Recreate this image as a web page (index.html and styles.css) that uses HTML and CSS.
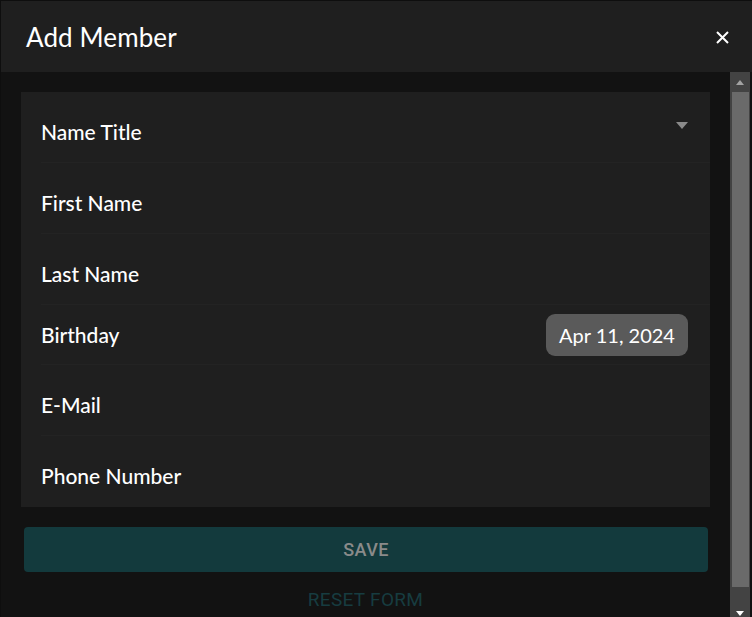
FILE: index.html
```html
<!DOCTYPE html>
<html lang="en">
<head>
<meta charset="utf-8">
<title>Add Member</title>
<link rel="stylesheet" href="styles.css">
</head>
<body>
<div class="dialog">
  <header class="dialog-header">
    <h1 class="dialog-title">Add Member</h1>
    <button class="close-btn" aria-label="Close">
      <svg width="13" height="13" viewBox="0 0 13 13"><path d="M1 1L12 12M12 1L1 12" stroke="#ffffff" stroke-width="2" fill="none"/></svg>
    </button>
  </header>
  <div class="dialog-body">
    <div class="content">
      <div class="card">
        <div class="row field">
          <span class="label">Name Title</span>
          <span class="caret"></span>
        </div>
        <div class="row field"><span class="label">First Name</span></div>
        <div class="row field"><span class="label">Last Name</span></div>
        <div class="row date-row">
          <span class="label">Birthday</span>
          <span class="chip">Apr 11, 2024</span>
        </div>
        <div class="row field"><span class="label">E-Mail</span></div>
        <div class="row field last"><span class="label">Phone Number</span></div>
      </div>
      <button class="save-btn">SAVE</button>
      <button class="reset-btn">RESET FORM</button>
    </div>
    <div class="scrollbar">
      <div class="sb-arrow up"></div>
      <div class="sb-thumb"></div>
      <div class="sb-arrow down"></div>
    </div>
  </div>
</div>
</body>
</html>
```
FILE: styles.css
```css
* { box-sizing: border-box; }
html, body { margin: 0; padding: 0; }
body {
  background: #0e0e0e;
  width: 752px;
  height: 617px;
  overflow: hidden;
  font-family: Lato, "Liberation Sans", sans-serif;
  color: #ffffff;
}
.dialog {
  width: 752px;
  height: 617px;
  border-top: 1px solid #0e0e0e;
  border-left: 1px solid #0e0e0e;
  display: flex;
  flex-direction: column;
}
.dialog-header {
  height: 71px;
  flex: none;
  background: #1f1f1f;
  display: flex;
  align-items: center;
  justify-content: space-between;
  padding: 0 23px 0 25px;
}
.dialog-title {
  margin: 0;
  font-size: 26px;
  font-weight: 400;
  letter-spacing: 0.1px;
  color: #ffffff;
}
.close-btn {
  background: none;
  border: 0;
  padding: 0;
  width: 13px;
  height: 13px;
  display: flex;
  margin-top: 1px;
}
.dialog-body {
  flex: 1;
  display: flex;
  background: #121212;
  min-height: 0;
}
.content {
  flex: 1;
  display: flex;
  flex-direction: column;
  padding: 20px 20px 0 20px;
  overflow: hidden;
}
.card {
  background: #1f1f1f;
  display: flex;
  flex-direction: column;
}
.row {
  margin-left: 20px;
  border-bottom: 1px solid #232323;
  display: flex;
  padding-right: 22px;
}
.row.last { border-bottom: 0; height: 71px; }
.field {
  height: 71px;
  padding-top: 28px;
  justify-content: space-between;
  align-items: flex-start;
}
.label {
  font-size: 21px;
  line-height: 24px;
  font-weight: 500;
  color: #ffffff;
}
.caret {
  width: 0;
  height: 0;
  border-left: 6px solid transparent;
  border-right: 6px solid transparent;
  border-top: 7px solid #8a8a8a;
  margin-top: 2px;
}
.date-row {
  height: 60px;
  align-items: center;
  justify-content: space-between;
}
.chip {
  background: #5a5a5a;
  border-radius: 9px;
  height: 42px;
  width: 142px;
  display: flex;
  align-items: center;
  justify-content: center;
  font-size: 20px;
  color: #ffffff;
  margin-top: 1px;
}
.save-btn {
  margin: 20px 2px 0 3px;
  height: 45px;
  flex: none;
  background: #133a3d;
  border: 0;
  border-radius: 4px;
  color: #8a8a8a;
  font-family: Roboto, "Liberation Sans", sans-serif;
  font-size: 18px;
  font-weight: 500;
  letter-spacing: 0.4px;
  padding: 0;
}
.reset-btn {
  background: none;
  border: 0;
  margin-top: 17px;
  padding: 0;
  color: #173c40;
  font-family: Roboto, "Liberation Sans", sans-serif;
  font-size: 19px;
  letter-spacing: 0.3px;
  line-height: 22px;
  flex: none;
}
.scrollbar {
  width: 20px;
  flex: none;
  background: #434343;
  display: flex;
  flex-direction: column;
  align-items: center;
  margin-right: 2px;
}
.sb-arrow {
  width: 0;
  height: 0;
  border-left: 4.5px solid transparent;
  border-right: 4.5px solid transparent;
  flex: none;
}
.sb-arrow.up {
  border-bottom: 5px solid #a3a3a3;
  margin-top: 8px;
  margin-bottom: 7px;
}
.sb-arrow.down {
  border-top: 5px solid #ffffff;
  margin-top: 24px;
}
.sb-thumb {
  width: 17px;
  height: 495px;
  background: #6a6a6a;
  margin-left: 1px;
  flex: none;
}
```
